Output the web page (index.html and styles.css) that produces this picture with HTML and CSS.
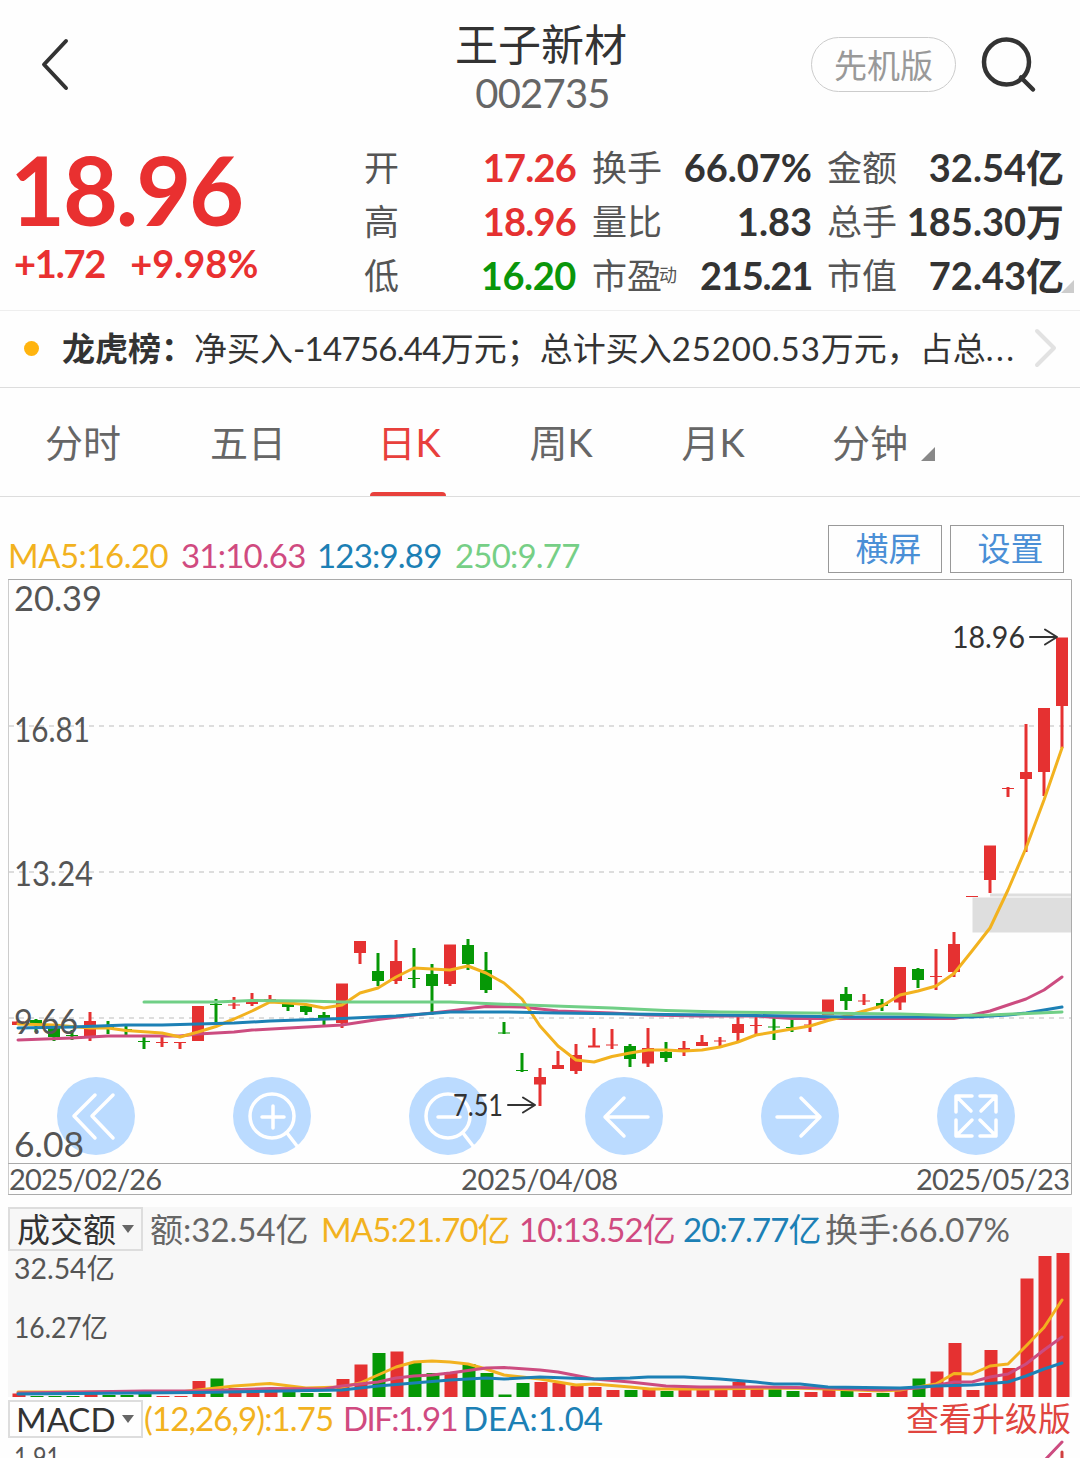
FILE: index.html
```html
<!DOCTYPE html>
<html lang="zh-CN">
<head>
  <meta charset="UTF-8">
  <title>王子新材 002735</title>
  <link rel="stylesheet" href="styles.css">
</head>
<body>
  <header class="topbar">
    <svg class="back" width="30" height="54" viewBox="0 0 30 54"><path d="M26 4 4 27.500 26 51"/></svg>
    <div class="title">
      <h1>王子新材</h1>
      <span>002735</span>
    </div>
    <div class="actions">
      <button class="pill">先机版</button>
      <svg class="search" width="56" height="56" viewBox="0 0 56 56"><circle cx="25.500" cy="25" r="22.500"/><path d="M40 40.500 52 52.500"/></svg>
    </div>
  </header>

  <section class="quote">
    <div class="price">
      <strong>18.96</strong>
      <p><span class="diff">+1.72</span><span>+9.98%</span></p>
    </div>
    <dl class="stats">
      <dt>开</dt><dd class="up">17.26</dd>
      <dt>换手</dt><dd>66.07%</dd>
      <dt>金额</dt><dd>32.54亿</dd>
      <dt>高</dt><dd class="up">18.96</dd>
      <dt>量比</dt><dd>1.83</dd>
      <dt>总手</dt><dd>185.30万</dd>
      <dt>低</dt><dd class="down">16.20</dd>
      <dt>市盈<small>动</small></dt><dd class="narrow">215.21</dd>
      <dt>市值</dt><dd>72.43亿</dd>
    </dl>
    <i class="corner"></i>
  </section>

  <section class="news">
    <i class="dot"></i>
    <b>龙虎榜：</b>
    <p>净买入<span class="tight">-14756.44</span>万元；总计买入<span class="loose">25200.53</span>万元，占总<span class="dots">...</span></p>
    <svg width="24" height="40" viewBox="0 0 24 40"><path d="M4 3 21 20 4 37"/></svg>
  </section>

  <nav class="tabs">
    <a>分时</a>
    <a>五日</a>
    <a class="active">日K</a>
    <a>周K</a>
    <a>月K</a>
    <a class="more">分钟</a>
  </nav>

  <div class="ma-row">
    <div class="legend ma">
      <span class="c-ma5">MA5:16.20</span>
      <span class="c-ma10">31:10.63</span>
      <span class="c-ma20">123:9.89</span>
      <span class="c-ma250">250:9.77</span>
    </div>
    <div class="btns">
      <button>横屏</button>
      <button>设置</button>
    </div>
  </div>

  <!-- K线 -->
  <svg id="kline" class="chart" width="1064" height="616" viewBox="8 579 1064 616">
    <g class="grid">
      <path d="M9 726H1071M9 872H1071M9 1018H1071"/>
    </g>
    <g class="gap">
      <rect x="972.500" y="897.500" width="99" height="35"/>
      <rect x="990" y="893.500" width="81" height="3"/>
    </g>
    <g class="tools">
      <g transform="translate(96 1116)"><circle r="39"/><path d="M-1-21-22 0-1 22M17-21-4 0 17 22"/></g>
      <g transform="translate(272 1116)"><circle r="39"/><circle class="ring" r="22"/><path d="M-10 1H12M1-10V12M15 17 25 30"/></g>
      <g transform="translate(448 1116)"><circle r="39"/><circle class="ring" r="22"/><path d="M-10 1H12M15 17 25 30"/></g>
      <g transform="translate(624 1116)"><circle r="39"/><path d="M24 1H-19M0-18-19 1 0 20"/></g>
      <g transform="translate(800 1116)"><circle r="39"/><path d="M-23 1H20M1-18 20 1 1 20"/></g>
      <g transform="translate(976 1116)"><circle r="39"/><path d="M-20-4V-20H-4M-20-20-5-5M4-20H20V-4M20-20 5-5M-20 4V20H-4M-20 20-4 4M4 20H20V4M20 20 4 4"/></g>
    </g>
    <g id="candles"></g>
    <g id="kma"></g>
    <g class="frame"><path d="M8.500 579.500H1071.500V1194.500H8.500ZM8.500 1163.500H1071.500"/></g>
    <g class="axis">
      <text x="14" y="611" textLength="88" lengthAdjust="spacingAndGlyphs">20.39</text>
      <text x="14" y="742" textLength="76" lengthAdjust="spacingAndGlyphs">16.81</text>
      <text x="14" y="886" textLength="79" lengthAdjust="spacingAndGlyphs">13.24</text>
      <text x="14" y="1034" textLength="64" lengthAdjust="spacingAndGlyphs">9.66</text>
      <text x="14" y="1157" textLength="70" lengthAdjust="spacingAndGlyphs">6.08</text>
    </g>
    <g class="dates">
      <text x="9" y="1190" textLength="153">2025/02/26</text>
      <text x="461" y="1190" textLength="157">2025/04/08</text>
      <text x="916" y="1190" textLength="154">2025/05/23</text>
    </g>
    <g class="marks">
      <text x="952" y="648" textLength="73" lengthAdjust="spacingAndGlyphs">18.96</text>
      <path d="M1030 637H1056M1045 629.500 1057 637 1045 644.500"/>
      <text x="453" y="1116" textLength="50" lengthAdjust="spacingAndGlyphs">7.51</text>
      <path d="M508 1105H534M523 1097.500 535 1105 523 1112.500"/>
    </g>
  </svg>

  <!-- 成交额 -->
  <section class="volume">
    <div class="legend">
      <button class="select">成交额</button>
      <span class="c-gray">额:32.54亿</span>
      <span class="c-ma5">MA5:21.70亿</span>
      <span class="c-ma10">10:13.52亿</span>
      <span class="c-ma20">20:7.77亿</span>
      <span class="c-gray">换手:66.07%</span>
    </div>
    <svg class="chart" width="1064" height="147" viewBox="8 1250 1064 147">
      <g id="bars"></g>
      <g id="vma"></g>
      <g class="axis small">
        <text x="14" y="1279" textLength="101" lengthAdjust="spacingAndGlyphs">32.54亿</text>
        <text x="14" y="1338" textLength="94" lengthAdjust="spacingAndGlyphs">16.27亿</text>
      </g>
    </svg>
  </section>

  <!-- MACD -->
  <section class="macd">
    <div class="legend">
      <button class="select">MACD</button>
      <span class="c-ma5">(12,26,9):1.75</span>
      <span class="c-ma10 dif">DIF:1.91</span>
      <span class="c-ma20 dea">DEA:1.04</span>
      <a class="upgrade">查看升级版</a>
    </div>
    <svg class="chart" width="1064" height="18" viewBox="8 1440 1064 18">
      <g class="axis small"><text x="14" y="1468" textLength="46" lengthAdjust="spacingAndGlyphs">1.91</text></g>
      <path class="line s-ma10" d="M1044 1461 1062 1442"/>
      <path class="line s-up" d="M1062 1452V1460"/>
    </svg>
  </section>

  <script>
    // 颜色, 最高, 最低, 实体上沿, 实体下沿, 成交柱顶部
    const days = [
      ['r',1021,1025,1021.5,1025,1393.5], ['g',1019,1032,1020,1024,1396], ['g',1024,1041,1026,1037,1396],
      ['g',1030,1040,1035,1036,1396], ['r',1012,1041,1021,1037,1392], ['g',1021,1034,1026,1028,1395],
      ['g',1026,1035,1029,1030,1395], ['g',1036,1049,1041,1042,1391], ['r',1037,1047,1042,1043,1396],
      ['r',1042,1049,1042,1043,1396], ['r',1006,1041,1006,1041,1381], ['g',999,1022,1004,1005,1378.5],
      ['r',997,1009,1004.5,1005.5,1388], ['r',993,1006,1002,1004,1389], ['r',995,1003,999,1000,1390],
      ['g',1000,1011,1004,1007,1390], ['g',1004,1015,1006,1012,1393], ['g',1012,1025,1015,1020,1393],
      ['r',984,1028,983.5,1023,1379], ['r',941,964,941,953,1364.5], ['g',953,986,971,981,1353],
      ['r',940,984,961,981,1351.5], ['g',948,988,978,979,1363], ['g',964,1015,974,986,1373],
      ['r',945,986,944.5,984,1372], ['g',939,970,945,964,1364], ['g',952,993,970,990,1373],
      ['g',1022,1034,1032.5,1033.5,1394.5], ['g',1053,1072,1070,1071,1383], ['r',1068,1106,1077,1084.5,1382],
      ['r',1051,1069,1065,1069,1383], ['r',1044,1074,1055,1071,1386], ['r',1028,1047,1045.5,1047.5,1387],
      ['r',1029,1049,1044.5,1045.5,1390], ['g',1044,1067,1046,1059,1390], ['r',1028,1067,1048,1063.5,1388],
      ['g',1042,1062,1052,1058,1391], ['r',1041,1056,1048,1050,1389], ['r',1035,1046,1042,1046,1389.5],
      ['r',1037,1046,1040.5,1041.5,1390], ['r',1015,1041,1024,1033,1382], ['r',1015,1035,1025,1026,1389],
      ['g',1017,1040,1026.5,1027.5,1389], ['g',1017,1032,1027,1028,1391], ['r',1017,1032,1024.5,1025.5,1392],
      ['r',1000,1015,999.5,1015,1390], ['g',987,1010,994,1001,1390], ['r',994,1005,1000.5,1001.5,1393],
      ['g',999,1011,1003,1006,1393], ['r',967,1010,967,1002.5,1389], ['g',968,988,969,980,1378.5],
      ['r',949,990,976,977,1371.5], ['r',932,977,944,972,1343], ['r',896,897,896,897,1390],
      ['r',846,893,845.5,880,1350], ['r',787,797,788,789,1368], ['r',724,852,772,779,1278.5],
      ['r',708,796,708,772,1256], ['r',638,748,637.5,706,1253]
    ];

    const kma = {
      ma10: '18,1040 72,1038 108,1036 180,1036 198,1034 234,1032 252,1030 342,1025 378,1019.5 414,1015 450,1011 486,1006.5 522,1007 558,1011 612,1013 648,1015 700,1016 756,1016 792,1018.5 954,1018.5 972,1015 990,1011 1026,999 1044,990 1062,977',
      ma5: '18,1024 54,1025 90,1028 108,1028 126,1030.5 162,1033 180,1037 198,1032 216,1026.5 234,1019 252,1011 270,1002 288,1003 306,1004.5 324,1008 342,1005 360,993 378,988 396,977 414,968 432,969 450,970 468,966 486,973 504,983 522,999 540,1026 558,1046 576,1060 594,1062 612,1056.5 630,1053 648,1050 666,1050 684,1051 702,1050 720,1047 738,1042 756,1035 774,1032 792,1029 810,1026 828,1020.5 846,1016 864,1011 882,1006 900,995 918,991 936,986 954,973.5 972,951 990,928 1008,890 1026,848 1044,800 1062,748',
      ma20: '18,1028 72,1027 126,1025 162,1025 234,1023 270,1021 342,1018.5 396,1016 450,1012 504,1012 558,1013 666,1014.5 756,1015.5 846,1017 954,1017 972,1017 1008,1015 1026,1013 1062,1007',
      ma250: '144,1002 216,1002 252,1000.5 306,1001 342,1002 450,1002 486,1003.5 540,1005.5 612,1008 666,1010.5 720,1012 810,1013 900,1014 954,1015.5 990,1015 1062,1012'
    };

    const vma = {
      ma5: '18,1392 54,1392 180,1392 198,1390 234,1386 270,1383.5 306,1388 342,1387 360,1383 378,1375 396,1367 414,1362 432,1361 450,1362 468,1364 486,1369 504,1375 522,1377 540,1379 558,1382 576,1385 594,1384 630,1387 650,1389 702,1389 792,1388 828,1389 882,1391 900,1390 918,1387 936,1384 954,1373.5 972,1374 990,1366 1008,1364 1026,1346 1044,1327.5 1062,1300',
      ma10: '18,1393 144,1391 198,1391 270,1388.5 324,1389 342,1386 378,1382 396,1378 414,1376 432,1375 450,1373 486,1368 504,1367.5 540,1370 558,1372 594,1379 630,1382 666,1386 700,1387 756,1387 828,1388 882,1390 918,1388 936,1385.5 954,1382 972,1382 990,1377 1008,1374 1026,1364 1044,1350 1062,1337',
      ma20: '18,1394 198,1392.5 342,1390 378,1386 414,1383 450,1380 486,1378 504,1379 540,1377 594,1379 630,1378 648,1377 684,1377 720,1379 756,1382 774,1384 800,1384 828,1387 900,1388 936,1386 972,1385 1008,1382 1026,1376 1044,1369 1062,1363'
    };

    let candles = '';
    let bars = '';
    days.forEach(([color, high, low, top, bottom, vol], i) => {
      const x = 18 + i * 18;
      const cls = color === 'r' ? 'up' : 'down';
      candles += `<rect class="${cls}" x="${x - 1.5}" y="${high}" width="3" height="${low - high}"/>`;
      candles += `<rect class="${cls}" x="${x - 6}" y="${top}" width="12" height="${bottom - top}"/>`;
      bars += `<rect class="${cls}" x="${x - 5.5}" y="${vol}" width="13" height="${1397 - vol}"/>`;
    });
    document.getElementById('candles').innerHTML = candles;
    document.getElementById('bars').innerHTML = bars;

    function lines(id, data) {
      document.getElementById(id).innerHTML = Object.keys(data)
        .map(k => `<polyline class="line s-${k}" points="${data[k]}"/>`).join('');
    }
    lines('kma', kma);
    lines('vma', vma);
  </script>
</body>
</html>
```
FILE: styles.css
```css
* {
  box-sizing: border-box;
  margin: 0;
  padding: 0;
}
body {
  width: 1080px;
  height: 1458px;
  overflow: hidden;
  background: #fefefe;
  color: #333;
  font-family: Lato, "Noto Sans CJK SC", sans-serif;
}
button {
  font-family: inherit;
  background: none;
}
svg {
  display: block;
  fill: none;
  stroke-linecap: round;
  stroke-linejoin: round;
}

/* header */
.topbar {
  display: grid;
  grid-template-columns: 330px 422px 1fr;
  height: 140px;
}
.back {
  margin: 37px 0 0 40px;
  stroke: #333;
  stroke-width: 4;
}
.title {
  padding-top: 19px;
  text-align: center;
}
.title h1 {
  font-size: 43px;
  font-weight: 400;
  line-height: 51px;
}
.title span {
  display: block;
  font-size: 40px;
  line-height: 46px;
  color: #666;
  letter-spacing: -0.8px;
  padding-left: 3px;
}
.actions {
  display: flex;
  gap: 25px;
  padding: 37px 0 0 59px;
}
.pill {
  width: 145px;
  height: 55px;
  border: 1.5px solid #ccc;
  border-radius: 28px;
  color: #999;
  font-size: 33px;
  line-height: 50px;
}
.search {
  stroke: #333;
  stroke-width: 4.5;
}

/* quote */
.quote {
  position: relative;
  display: flex;
  height: 170px;
}
.price {
  width: 365px;
  padding-left: 14px;
  color: #e93030;
}
.price strong {
  display: block;
  margin-left: -4px;
  font-size: 95px;
  line-height: 98px;
  letter-spacing: -2.2px;
}
.price p {
  display: flex;
  gap: 25px;
  padding-top: 2px;
  font-size: 38px;
  font-weight: 700;
  line-height: 46px;
}
.price .diff {
  letter-spacing: -1.2px;
}
.stats {
  display: grid;
  grid-template-columns: 71px 141px 16px 80px 140px 15px 80px 156px;
  grid-auto-rows: 54px;
  margin-left: -1px;
  line-height: 54px;
}
.stats dt {
  font-size: 35px;
  color: #555;
  white-space: nowrap;
}
.stats dt:nth-of-type(3n+2) {
  grid-column: 4;
}
.stats dt:nth-of-type(3n) {
  grid-column: 7;
}
.stats dt:nth-of-type(3n+1) {
  grid-column: 1;
}
.stats dt small {
  font-size: 18px;
  vertical-align: 7px;
  line-height: 1;
  margin-left: -3px;
}
.stats dd {
  display: flex;
  justify-content: flex-end;
  font-size: 38px;
  font-weight: 700;
  white-space: nowrap;
}
.stats dd:last-of-type,
.stats dd:nth-of-type(3n) {
  margin-right: -1px;
}
.stats .up {
  color: #e53131;
  letter-spacing: -0.8px;
}
.stats .down {
  color: #0a960a;
  letter-spacing: -0.4px;
}
.stats .narrow {
  letter-spacing: -1.2px;
}
.corner {
  position: absolute;
  right: 6px;
  bottom: 17px;
  border-left: 13px solid transparent;
  border-bottom: 13px solid #ccc;
}

/* news */
.news {
  display: flex;
  align-items: center;
  height: 78px;
  padding: 0 23px 2px 24px;
  border-top: 1px solid #eee;
  border-bottom: 1px solid #ddd;
  font-size: 33px;
  line-height: 74px;
  white-space: nowrap;
}
.dot {
  width: 15px;
  height: 15px;
  margin-right: 23px;
  border-radius: 50%;
  background: #ffb40f;
}
.news p {
  flex: 1;
}
.news .tight {
  letter-spacing: -0.7px;
}
.news .loose {
  letter-spacing: 0.9px;
}
.news .dots {
  letter-spacing: 2.5px;
}
.news svg {
  stroke: #e2e2e2;
  stroke-width: 4;
}

/* tabs */
.tabs {
  display: grid;
  grid-template-columns: 166px 164px 158px 146px 158px 156px;
  height: 109px;
  border-bottom: 1px solid #ddd;
  color: #666;
  font-size: 38px;
  line-height: 108px;
  text-align: center;
}
.tabs a {
  position: relative;
}
.tabs .active {
  color: #e8403c;
}
.tabs .active::after {
  content: "";
  position: absolute;
  left: 40px;
  bottom: 0;
  width: 76px;
  height: 4px;
  border-radius: 5px 5px 0 0;
  background: #e8403c;
}
.tabs .more::after {
  content: "";
  position: absolute;
  left: 129px;
  bottom: 35px;
  border-left: 14px solid transparent;
  border-bottom: 14px solid #888;
}

/* legends */
.ma-row {
  display: flex;
  justify-content: space-between;
  height: 82px;
  padding: 28px 16px 0 8px;
}
.legend {
  display: grid;
  align-items: center;
  white-space: nowrap;
  font-size: 33px;
  line-height: 40px;
}
.legend.ma {
  grid-template-columns: 173px 136px 138px auto;
  height: 60px;
  letter-spacing: -0.8px;
}
.legend.ma .c-ma5 {
  letter-spacing: -0.5px;
}
.btns {
  display: flex;
  gap: 8px;
}
.btns button {
  width: 114px;
  height: 48px;
  padding-left: 7px;
  border: 1px solid #999;
  color: #4a8fd6;
  font-size: 33px;
  line-height: 40px;
  padding-bottom: 3px;
}
.c-ma5 { color: #f2b21f; }
.c-ma10 { color: #d04a80; }
.c-ma20 { color: #1c80b5; }
.c-ma250 { color: #76cf86; }
.c-gray { color: #666; }

/* charts */
.chart {
  margin-left: 8px;
}
.grid path {
  stroke: #d2d2d2;
  stroke-width: 1.5;
  stroke-dasharray: 5 5;
  stroke-linecap: butt;
}
.gap rect {
  fill: #dedede;
}
.frame path {
  stroke: #aaa;
}
.tools circle {
  fill: #bbdbff;
}
.tools path,
.tools .ring {
  fill: none;
  stroke: #fff;
  stroke-width: 3.5;
}
.chart .up { fill: #e53131; }
.chart .down { fill: #069806; }
.line {
  stroke-width: 3;
}
.s-ma5 { stroke: #f2b21f; }
.s-ma10 { stroke: #cc4c80; }
.s-ma20 { stroke: #1c80b5; }
.s-ma250 { stroke: #70cf86; }
.s-up { stroke: #d04040; }
.axis text,
.dates text {
  fill: #555;
  font-size: 35px;
}
.dates text {
  font-size: 29px;
}
.axis.small text {
  font-size: 28px;
}
.marks text {
  fill: #333;
  font-size: 31px;
}
.marks path {
  stroke: #333;
  stroke-width: 2;
}

/* volume and macd */
.volume {
  margin-top: 12px;
}
.volume .legend {
  grid-template-columns: 142px 171px 198px 164px 142px auto;
  height: 43px;
  margin: 0 8px;
  padding-bottom: 3px;
  background: #f7f7f7;
}
.volume .c-ma5,
.volume .c-ma10,
.volume .c-ma20 {
  letter-spacing: -0.9px;
}
.volume .chart {
  background: #f7f7f7;
}
.select {
  display: flex;
  align-items: center;
  justify-content: space-between;
  width: 135px;
  height: 44px;
  padding: 0 7px;
  border: 2px solid #ddd;
  color: #333;
  font-size: 33px;
  line-height: 36px;
}
.select::after {
  content: "";
  border: 6px solid transparent;
  border-top: 8px solid #666;
  border-bottom: 0;
}
.macd .legend {
  grid-template-columns: 136px 199px 120px 1fr auto;
  height: 43px;
  padding: 0 9px 2px 8px;
}
.macd .select {
  height: 38px;
  margin-top: 3px;
  padding-left: 6px;
}
.macd .c-ma5 {
  letter-spacing: -0.9px;
}
.macd .dif {
  letter-spacing: -1.5px;
}
.upgrade {
  color: #e0453f;
}
```
